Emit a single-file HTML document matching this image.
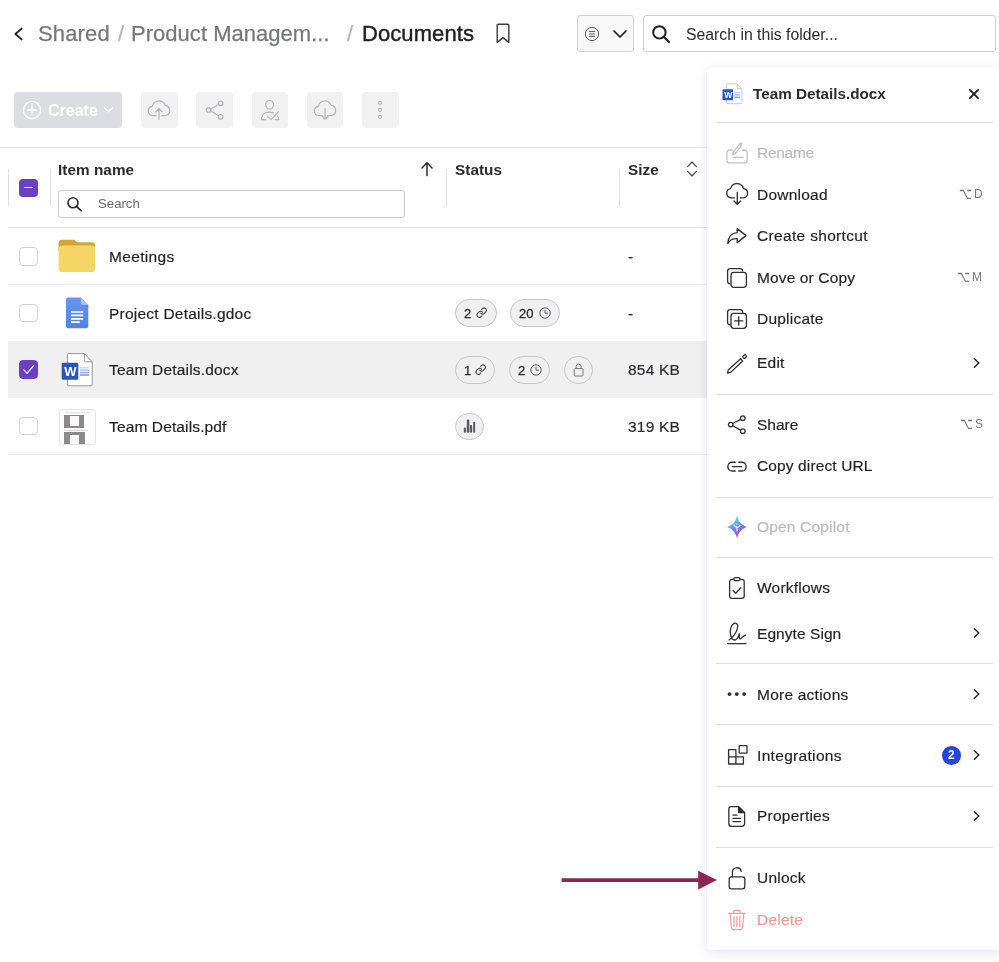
<!DOCTYPE html>
<html lang="en">
<head>
<meta charset="utf-8">
<title>Documents</title>
<style>
*{box-sizing:border-box;margin:0;padding:0}
html,body{width:999px;height:962px;overflow:hidden;background:#fff}
body{font-family:"Liberation Sans",sans-serif;color:#1f2024;position:relative}
.abs{position:absolute}
.t{position:absolute;white-space:nowrap;line-height:1;will-change:transform}
.pill span{will-change:transform}
svg{position:absolute;overflow:visible}
/* header */
.crumb{-webkit-text-stroke:0.25px;font-size:22px;letter-spacing:0.03px;color:#75777d}
.crumb.cur{color:#1f2024;-webkit-text-stroke:0.45px #1f2024}
.box{position:absolute;border:1px solid #c9cacf;border-radius:3px;background:#fff}
/* toolbar */
.ib{position:absolute;top:92px;width:36.5px;height:36px;border-radius:4px;background:#f1f1f2}
/* table */
.hl{position:absolute;left:8px;height:1px;background:#e6e6e9}
.cb{position:absolute;left:19px;width:19px;height:18.5px;border:1.2px solid #d3d3d5;border-radius:4px;background:#fff}
.name{-webkit-text-stroke:0.18px #1f2024;font-size:15.5px;letter-spacing:0.23px;color:#1f2024;left:109px}
.size{-webkit-text-stroke:0.18px #2a2b30;font-size:15.5px;letter-spacing:0.2px;color:#2a2b30;left:628px}
.pill{position:absolute;height:27.5px;border:1px solid #c6c7cb;border-radius:14px;background:#f0f0f1;font-size:13px;color:#2a2b30}
.pill span{position:absolute;top:7px;line-height:1;-webkit-text-stroke:0.3px #2a2b30}
/* panel */
#panel{position:absolute;left:707px;top:67px;width:300px;height:883px;background:#fff;border-radius:3.5px;box-shadow:0 3px 12px rgba(90,80,190,.15),0 0 1px rgba(90,80,190,.16)}
.mi{-webkit-text-stroke:0.18px;font-size:15.5px;letter-spacing:0.23px;color:#1f2024;left:50px}
.mi.dis{color:#b9babf}
.mi.del{color:#eb9a9a}
.sc{font-size:12px;color:#75777d}
.opt{display:inline-block;transform:scale(.92,1.32);transform-origin:50% 55%}
.sep{position:absolute;left:9px;width:277px;height:1px;background:#dddde3}
</style>
</head>
<body>

<!-- ===== header / breadcrumb ===== -->
<svg style="left:13px;top:26px" width="12" height="16" viewBox="0 0 12 16"><path d="M8.6 2.6 L2.4 8 L8.6 13.4" fill="none" stroke="#1f2024" stroke-width="1.9" stroke-linecap="round" stroke-linejoin="round"/></svg>
<div class="t crumb" id="c1" style="left:37.8px;top:22.7px;letter-spacing:0.15px">Shared</div>
<div class="t crumb" id="c2" style="left:117.6px;top:22.7px;color:#b4b5ba">/</div>
<div class="t crumb" id="c3" style="left:131px;top:22.7px">Product Managem...</div>
<div class="t crumb" id="c4" style="left:347.4px;top:22.7px;color:#b4b5ba">/</div>
<div class="t crumb cur" id="c5" style="left:362px;top:22.7px;letter-spacing:0.08px">Documents</div>
<svg style="left:496px;top:23px" width="14" height="21" viewBox="0 0 14 21"><path d="M1.2 2.4 Q1.2 1.2 2.4 1.2 H11.6 Q12.8 1.2 12.8 2.4 V19.4 L7 14.6 L1.2 19.4 Z" fill="none" stroke="#3a3b40" stroke-width="1.4" stroke-linejoin="round"/></svg>

<div class="box" style="left:577px;top:15px;width:57px;height:37px;background:#f8f8f9;border-color:#d3d3d7"></div>
<svg style="left:584px;top:26px" width="16" height="16" viewBox="0 0 16 16"><circle cx="8" cy="8" r="6.6" fill="none" stroke="#55565c" stroke-width="1"/><path d="M5 5.6H11M5 8H11M5 10.4H11" stroke="#55565c" stroke-width="1"/></svg>
<svg style="left:612px;top:28px" width="16" height="12" viewBox="0 0 16 12"><path d="M2 3 L8 9 L14 3" fill="none" stroke="#1f2024" stroke-width="1.7" stroke-linecap="round" stroke-linejoin="round"/></svg>

<div class="box" style="left:643px;top:15px;width:353px;height:37px;border-color:#cfd0d4"></div>
<svg style="left:651px;top:24px" width="20" height="20" viewBox="0 0 20 20"><circle cx="8.4" cy="8.4" r="6.2" fill="none" stroke="#1f2024" stroke-width="2"/><path d="M13 13 L18 18" stroke="#1f2024" stroke-width="2.2" stroke-linecap="round"/></svg>
<div class="t" id="sf" style="left:686px;top:26.7px;font-size:15.8px;color:#2a2b30">Search in this folder...</div>

<!-- ===== toolbar ===== -->
<div class="abs" style="left:14px;top:92px;width:108px;height:36px;border-radius:4px;background:#dcdde2"></div>
<svg style="left:22px;top:100px" width="20" height="20" viewBox="0 0 20 20"><circle cx="10" cy="10" r="8.6" fill="none" stroke="#fff" stroke-width="1.3"/><path d="M10 5.6V14.4M5.6 10H14.4" stroke="#fff" stroke-width="1.3" stroke-linecap="round"/></svg>
<div class="t" id="cr" style="left:47.6px;top:103px;font-size:16px;font-weight:bold;color:#fff">Create</div>
<svg style="left:103px;top:106px" width="11" height="8" viewBox="0 0 11 8"><path d="M1.2 1.6 L5.5 5.8 L9.8 1.6" fill="none" stroke="#fff" stroke-width="1.2" stroke-linecap="round" stroke-linejoin="round"/></svg>

<div class="ib" style="left:141.2px"></div>
<div class="ib" style="left:196.4px"></div>
<div class="ib" style="left:251.6px"></div>
<div class="ib" style="left:306.8px"></div>
<div class="ib" style="left:362px"></div>
<!-- cloud upload -->
<svg style="left:147.3px;top:99px" width="24" height="22" viewBox="0 0 24 22" fill="none" stroke="#b3b4b9" stroke-width="1.2" stroke-linecap="round" stroke-linejoin="round"><path d="M9.2 16.6 H5.9 A4.6 4.6 0 0 1 5.3 7.45 A6.7 6.7 0 0 1 18.2 6.4 A5.15 5.15 0 0 1 18.2 16.6 H14.8"/><path d="M12 20.2 V9.6 M8.7 12.8 L12 9.5 L15.3 12.8"/></svg>
<!-- share -->
<svg style="left:204.2px;top:99px" width="22" height="22" viewBox="0 0 22 22" fill="none" stroke="#b3b4b9" stroke-width="1.2"><circle cx="16.6" cy="4.3" r="2.3"/><circle cx="4.6" cy="11" r="2.3"/><circle cx="16.6" cy="17.8" r="2.3"/><path d="M6.6 9.9 L14.6 5.4 M6.6 12.1 L14.6 16.7"/></svg>
<!-- person check -->
<svg style="left:259.3px;top:98px" width="22" height="24" viewBox="0 0 22 24" fill="none" stroke="#b3b4b9" stroke-width="1.2" stroke-linecap="round" stroke-linejoin="round"><ellipse cx="10.6" cy="6.8" rx="3.9" ry="4.3"/><path d="M7 21.6 H2.4 C2.4 17 5.6 14.1 10.2 14.1 C12 14.1 13.4 14.4 14.6 14.9"/><path d="M8.4 18.4 L12 21.6 L19.6 13.5"/><path d="M18.6 18 C19.3 19 19.6 20 19.6 21.6 H16.2"/></svg>
<!-- cloud download -->
<svg style="left:313px;top:99px" width="24" height="22" viewBox="0 0 24 22" fill="none" stroke="#b3b4b9" stroke-width="1.2" stroke-linecap="round" stroke-linejoin="round"><path d="M9.2 16.6 H5.9 A4.6 4.6 0 0 1 5.3 7.45 A6.7 6.7 0 0 1 18.2 6.4 A5.15 5.15 0 0 1 18.2 16.6 H14.8"/><path d="M12 9.6 V20.2 M8.7 17 L12 20.3 L15.3 17"/></svg>
<!-- kebab -->
<svg style="left:374.2px;top:98.6px" width="12" height="22" viewBox="0 0 12 22" fill="none" stroke="#b3b4b9" stroke-width="1.1"><circle cx="6" cy="3.9" r="1.5"/><circle cx="6" cy="10.9" r="1.5"/><circle cx="6" cy="17.9" r="1.5"/></svg>

<!-- ===== table ===== -->
<div class="hl" style="top:147px;left:0;width:707px"></div>
<div class="hl" style="top:227px;width:699px;background:#e4e4e8"></div>
<div class="hl" style="top:283.7px;width:699px;background:#efeff2"></div>
<div class="hl" style="top:454px;width:699px;background:#ededf0"></div>
<div class="abs" style="left:8px;top:340.8px;width:699px;height:57.2px;background:#f0f0f0"></div>

<div class="t" style="left:58px;top:161.6px;font-size:15.3px;letter-spacing:0.05px;font-weight:bold;color:#2a2b30" id="h1">Item name</div>
<div class="t" style="left:455px;top:161.6px;font-size:15.3px;letter-spacing:0.05px;font-weight:bold;color:#2a2b30" id="h2">Status</div>
<div class="t" style="left:628px;top:161.6px;font-size:15.3px;letter-spacing:0.05px;font-weight:bold;color:#2a2b30" id="h3">Size</div>
<div class="box" style="left:58px;top:190px;width:346.5px;height:28px"></div>
<div class="abs" style="left:8px;top:169px;width:1px;height:37px;background:#dfdfe3"></div>
<div class="abs" style="left:49.5px;top:169px;width:1px;height:37px;background:#dfdfe3"></div>
<div class="abs" style="left:446px;top:169px;width:1px;height:37px;background:#dfdfe3"></div>
<div class="abs" style="left:619px;top:169px;width:1px;height:37px;background:#dfdfe3"></div>
<div class="abs" style="left:19px;top:178.5px;width:19px;height:18.5px;border-radius:4px;background:#6a42c1"></div>
<div class="abs" style="left:24px;top:186.8px;width:9px;height:1.6px;border-radius:1px;background:#e9e2fa"></div>
<svg style="left:66px;top:196px" width="17" height="16" viewBox="0 0 17 16"><circle cx="7" cy="6.8" r="5" fill="none" stroke="#2a2b30" stroke-width="1.6"/><path d="M10.8 10.6 L15 14.6" stroke="#2a2b30" stroke-width="1.8" stroke-linecap="round"/></svg>
<svg style="left:420px;top:161px" width="14" height="16" viewBox="0 0 14 16" fill="none" stroke="#2a2b30" stroke-width="1.5" stroke-linecap="round" stroke-linejoin="round"><path d="M7 14.4 V2 M2 7 L7 1.8 L12 7"/></svg>
<svg style="left:686px;top:160px" width="12" height="18" viewBox="0 0 12 18" fill="none" stroke="#3a3b40" stroke-width="1.1" stroke-linecap="round" stroke-linejoin="round"><path d="M1.6 6.6 L6 2 L10.4 6.6 M1.6 11.4 L6 16 L10.4 11.4"/></svg>
<div class="t" style="left:98px;top:197px;font-size:13.2px;color:#696a70" id="hs">Search</div>

<div class="t name" style="top:249.45px;letter-spacing:0.33px">Meetings</div>
<div class="t name" style="top:306.15px">Project Details.gdoc</div>
<div class="t name" style="top:362.4px;letter-spacing:0.18px">Team Details.docx</div>
<div class="t name" style="top:418.9px;letter-spacing:0.13px">Team Details.pdf</div>
<div class="t size" style="top:249.45px">-</div>
<div class="t size" style="top:306.15px">-</div>
<div class="t size" style="top:362.4px">854 KB</div>
<div class="t size" style="top:418.9px">319 KB</div>

<div class="cb" style="top:247px"></div>
<div class="cb" style="top:303.7px"></div>
<div class="cb" style="top:360.3px;background:#6a42c1;border-color:#6a42c1"></div>
<svg style="left:19px;top:360.3px" width="19" height="19" viewBox="0 0 19 19"><path d="M4.9 9.9 L8.1 13.3 L14.6 5.6" fill="none" stroke="#fff" stroke-width="1.15" stroke-linecap="round" stroke-linejoin="round"/></svg>
<div class="cb" style="top:416.9px"></div>

<!-- folder icon -->
<svg style="left:58px;top:239px" width="38" height="34" viewBox="0 0 38 34"><path d="M0.6 4.2 Q0.6 0.8 4 0.8 H15 Q16.6 0.8 17.6 1.9 L18.4 2.7 Q19 3.3 20 3.3 H33.6 Q37 3.3 37 6.7 V12 H0.6 Z" fill="#d4a62f"/><rect x="0.6" y="6.4" width="36.4" height="26.6" rx="3.6" fill="#f6d568"/></svg>
<!-- gdoc icon -->
<svg style="left:66px;top:297px" width="23" height="32" viewBox="0 0 23 32"><defs><linearGradient id="gd" x1="0" y1="0" x2="0" y2="1"><stop offset="0" stop-color="#6a94ee"/><stop offset="1" stop-color="#5482e4"/></linearGradient></defs><path d="M2 0.4 H14.8 L22.3 7.9 V29.2 Q22.3 31.2 20.3 31.2 H2 Q0 31.2 0 29.2 V2.4 Q0 0.4 2 0.4 Z" fill="url(#gd)"/><path d="M14.8 0.4 L22.3 7.9 H16.8 Q14.8 7.9 14.8 5.9 Z" fill="#a9c1f5"/><path d="M14.9 7.9 H22.3 V10.2 Z" fill="#4a74d0" opacity=".55"/><path d="M5 15 H17.2 M5 18.4 H17.2 M5 21.8 H17.2 M5 25.2 H13.8" stroke="#fff" stroke-width="1.7"/></svg>
<!-- word icon -->
<svg style="left:61px;top:352px" width="33" height="36" viewBox="0 0 33 36"><path d="M7.6 1.6 H23.4 L31.2 9.8 V32.6 Q31.2 33.8 30 33.8 H7.6 Q6.4 33.8 6.4 32.6 V2.8 Q6.4 1.6 7.6 1.6 Z" fill="#fff" stroke="#8a8a8a" stroke-width="0.9"/><path d="M23.4 1.6 V8.6 Q23.4 9.8 24.6 9.8 H31.2" fill="none" stroke="#8a8a8a" stroke-width="0.9"/><path d="M19 15.8 H28" stroke="#c3d6f2" stroke-width="1.5"/><path d="M19 18.2 H28" stroke="#a9c3ec" stroke-width="1.5"/><path d="M19 20.6 H28" stroke="#8fade0" stroke-width="1.5"/><path d="M19 23 H28" stroke="#7b97d2" stroke-width="1.5"/><rect x="0.7" y="10.8" width="16.6" height="17" rx="1.2" fill="#2a56b5"/></svg>
<div class="t" style="left:61.7px;top:364.6px;width:16.6px;text-align:center;font-size:13px;font-weight:bold;color:#fff">W</div>
<!-- pdf thumbnail -->
<div class="abs" style="left:59px;top:409px;width:36.5px;height:36px;border:1px solid #e2e2e4;border-radius:4px;background:#fff;overflow:hidden">
  <div class="abs" style="left:5px;top:1.5px;width:26px;height:1px;background:#e2e2e2"></div>
  <div class="abs" style="left:4.4px;top:4.6px;width:19.4px;height:13.6px;background:#8b8b8b"></div>
  <div class="abs" style="left:9.8px;top:6.4px;width:8.8px;height:9.6px;background:#fbf7f7"></div>
  <div class="abs" style="left:4.4px;top:19.6px;width:24px;height:1px;background:#d4d8e2"></div>
  <div class="abs" style="left:4.4px;top:22px;width:20.6px;height:14px;background:#8b8b8b"></div>
  <div class="abs" style="left:10px;top:24.6px;width:9.2px;height:12px;background:#fbf7f7"></div>
</div>

<!-- status pills -->
<div class="pill" style="left:455px;top:299px;width:41.5px"><span style="left:8px">2</span></div>
<div class="pill" style="left:510px;top:299px;width:49.5px"><span style="left:8px">20</span></div>
<div class="pill" style="left:455px;top:356px;width:40px"><span style="left:8px">1</span></div>
<div class="pill" style="left:509px;top:356px;width:41px"><span style="left:7.6px">2</span></div>
<div class="pill" style="left:564px;top:356px;width:29px"></div>
<div class="pill" style="left:455px;top:412.5px;width:29px"></div>
<!-- link icons -->
<svg style="left:476px;top:307.4px" width="11.4" height="11.4" viewBox="0 0 24 24" fill="none" stroke="#45464b" stroke-width="2.25" stroke-linecap="round"><path d="M10 13a5 5 0 0 0 7.54.54l3-3a5 5 0 0 0-7.07-7.07l-1.72 1.71"/><path d="M14 11a5 5 0 0 0-7.54-.54l-3 3a5 5 0 0 0 7.07 7.07l1.71-1.71"/></svg>
<svg style="left:474.8px;top:364.4px" width="11.4" height="11.4" viewBox="0 0 24 24" fill="none" stroke="#45464b" stroke-width="2.25" stroke-linecap="round"><path d="M10 13a5 5 0 0 0 7.54.54l3-3a5 5 0 0 0-7.07-7.07l-1.72 1.71"/><path d="M14 11a5 5 0 0 0-7.54-.54l-3 3a5 5 0 0 0 7.07 7.07l1.71-1.71"/></svg>
<!-- clock icons -->
<svg style="left:539px;top:307px" width="12" height="12" viewBox="0 0 12 12" fill="none" stroke="#4a4b50" stroke-width="0.9"><circle cx="6" cy="6" r="5.2"/><path d="M6 2.8 V6.2 H9"/></svg>
<svg style="left:530px;top:364px" width="12" height="12" viewBox="0 0 12 12" fill="none" stroke="#4a4b50" stroke-width="0.9"><circle cx="6" cy="6" r="5.2"/><path d="M6 2.8 V6.2 H9"/></svg>
<!-- lock small -->
<svg style="left:573px;top:363px" width="11" height="14" viewBox="0 0 11 14" fill="none" stroke="#6a6b70" stroke-width="0.9"><rect x="1.2" y="5.6" width="8.8" height="7.4" rx="1"/><path d="M3.2 5.6 V3.4 A2.4 2.4 0 0 1 8 3.4 V5.6"/></svg>
<!-- bars -->
<svg style="left:463px;top:419px" width="13" height="15" viewBox="0 0 13 15" fill="#5a5a5f"><rect x="0.8" y="8.5" width="2.1" height="5.3" rx="1"/><rect x="3.8" y="0.5" width="2.5" height="13.3" rx="1.1"/><rect x="6.9" y="6" width="2.2" height="7.8" rx="1"/><rect x="10.1" y="2.8" width="2" height="11" rx="1"/></svg>

<!-- ===== context panel ===== -->
<div id="panel">
  <div class="t" style="left:46px;top:19px;font-size:15.25px;font-weight:bold;color:#2a2b30" id="pt">Team Details.docx</div>
  <div class="sep" style="top:55px"></div>
  <div class="t mi dis" style="top:78.35px;letter-spacing:-0.27px">Rename</div>
  <div class="t mi" style="top:119.85px">Download</div>
  <div class="t mi" style="top:161.35px;letter-spacing:0.33px">Create shortcut</div>
  <div class="t mi" style="top:202.55px;letter-spacing:0.13px">Move or Copy</div>
  <div class="t mi" style="top:244.25px">Duplicate</div>
  <div class="t mi" style="top:288.35px">Edit</div>
  <div class="sep" style="top:327px"></div>
  <div class="t mi" style="top:349.85px;letter-spacing:0px">Share</div>
  <div class="t mi" style="top:391.45px;letter-spacing:0.12px">Copy direct URL</div>
  <div class="sep" style="top:429.6px"></div>
  <div class="t mi dis" style="top:452.15px;letter-spacing:0.18px">Open Copilot</div>
  <div class="sep" style="top:490.3px"></div>
  <div class="t mi" style="top:513.25px">Workflows</div>
  <div class="t mi" style="top:558.85px;letter-spacing:0.06px">Egnyte Sign</div>
  <div class="sep" style="top:596px"></div>
  <div class="t mi" style="top:619.65px">More actions</div>
  <div class="sep" style="top:657px"></div>
  <div class="t mi" style="top:680.85px;letter-spacing:0.32px">Integrations</div>
  <div class="sep" style="top:718.5px"></div>
  <div class="t mi" style="top:741.45px">Properties</div>
  <div class="sep" style="top:779.6px"></div>
  <div class="t mi" style="top:803.35px">Unlock</div>
  <div class="t mi del" style="top:844.55px">Delete</div>
</div>

<!-- ===== panel icons (absolute page coords) ===== -->
<!-- small word icon -->
<svg style="left:722px;top:83px" width="21" height="22" viewBox="0 0 21 22"><path d="M5.2 0.8 H15 L20 5.8 V19.8 Q20 20.6 19.2 20.6 H5.2 Q4.4 20.6 4.4 19.8 V1.6 Q4.4 0.8 5.2 0.8 Z" fill="#fff" stroke="#b5b5b8" stroke-width="0.7"/><path d="M15 0.8 V5 Q15 5.8 15.8 5.8 H20" fill="none" stroke="#b5b5b8" stroke-width="0.7"/><path d="M12.2 9.6 H18" stroke="#b9d0f2" stroke-width="1"/><path d="M12.2 11.3 H18" stroke="#a3bfea" stroke-width="1"/><path d="M12.2 13 H18" stroke="#8eaadf" stroke-width="1"/><path d="M12.2 14.7 H18" stroke="#7d98d3" stroke-width="1"/><rect x="0.5" y="6.2" width="10.6" height="11" rx="0.8" fill="#2a56b5"/></svg>
<div class="t" style="left:722.5px;top:90.6px;width:10.6px;text-align:center;font-size:8.6px;font-weight:bold;color:#fff">W</div>
<!-- close x -->
<svg style="left:968px;top:88px" width="12" height="12" viewBox="0 0 12 12"><path d="M1.9 1.9 L10.1 10.1 M10.1 1.9 L1.9 10.1" stroke="#1f2024" stroke-width="1.9" stroke-linecap="round"/></svg>
<!-- rename -->
<svg style="left:725px;top:141px" width="24" height="24" viewBox="0 0 24 24" fill="none" stroke="#c3c4c9" stroke-width="1.3" stroke-linecap="round" stroke-linejoin="round"><path d="M7.4 9 H4.6 Q1.9 9 1.9 11.7 V19.2 Q1.9 21.9 4.6 21.9 H19.4 Q22.1 21.9 22.1 19.2 V11.7 Q22.1 9 19.4 9 H17.4"/><path d="M8.6 16.3 H18"/><path d="M7.6 13.6 L8.4 11 L14.2 3.6 L16.2 5.1 L10.2 12.6 Z"/><circle cx="15.9" cy="2.9" r="1.1"/></svg>
<!-- download -->
<svg style="left:724.6px;top:183.2px" width="25" height="23" viewBox="0 0 25 23" fill="none" stroke="#2f3035" stroke-width="1.35" stroke-linecap="round" stroke-linejoin="round"><path d="M9.4 14.8 H6 A4.6 4.6 0 0 1 5.5 5.7 A6.7 6.7 0 0 1 18.5 5.6 A4.65 4.65 0 0 1 18.7 14.8 H15.2"/><path d="M12.3 9.4 V21.2 M9 18 L12.3 21.3 L15.6 18"/></svg>
<!-- create shortcut -->
<svg style="left:726px;top:227px" width="22" height="19" viewBox="0 0 22 19" fill="none" stroke="#2f3035" stroke-width="1.35" stroke-linejoin="round"><path d="M11.2 1.6 L20 8.6 L11.2 15.6 V11.6 C7 11.4 4 12.6 1.8 16.4 C2.2 10 5.6 6 11.2 5.6 Z"/></svg>
<!-- move or copy -->
<svg style="left:726px;top:266.6px" width="22" height="22" viewBox="0 0 22 22" fill="none" stroke="#2f3035" stroke-width="1.3" stroke-linejoin="round"><path d="M4.6 16.8 H4.2 Q1.6 16.8 1.6 14.2 V4.2 Q1.6 1.6 4.2 1.6 H14 Q16.6 1.6 16.8 4.4"/><rect x="5" y="5.4" width="15.4" height="15" rx="2.8" fill="#fff"/></svg>
<!-- duplicate -->
<svg style="left:726px;top:307.8px" width="22" height="22" viewBox="0 0 22 22" fill="none" stroke="#2f3035" stroke-width="1.3" stroke-linejoin="round" stroke-linecap="round"><path d="M4.6 16.8 H4.2 Q1.6 16.8 1.6 14.2 V4.2 Q1.6 1.6 4.2 1.6 H14 Q16.6 1.6 16.8 4.4"/><rect x="5" y="5.4" width="15.4" height="15" rx="2.8" fill="#fff"/><path d="M12.7 8.8 V17 M8.6 12.9 H16.8"/></svg>
<!-- edit pencil -->
<svg style="left:726px;top:353px" width="22" height="22" viewBox="0 0 22 22" fill="none" stroke="#2f3035" stroke-width="1.3" stroke-linejoin="round" stroke-linecap="round"><path d="M1.6 20.2 L2.2 17 L14.6 5.8 L16.6 8 L4.6 19.4 Z"/><ellipse cx="18.6" cy="3.6" rx="1.9" ry="1.5" transform="rotate(-42 18.6 3.6)"/></svg>
<!-- share -->
<svg style="left:727px;top:414px" width="20" height="21" viewBox="0 0 20 21" fill="none" stroke="#2f3035" stroke-width="1.3"><circle cx="15.8" cy="4.2" r="2.3"/><circle cx="3.7" cy="10.6" r="2.3"/><circle cx="15.8" cy="17.2" r="2.3"/><path d="M5.7 9.5 L13.8 5.3 M5.7 11.7 L13.8 16.1"/></svg>
<!-- link -->
<svg style="left:726px;top:460px" width="22" height="13" viewBox="0 0 22 13" fill="none" stroke="#2f3035" stroke-width="1.4" stroke-linecap="round"><path d="M9.2 2.3 H6.2 A4.35 4.35 0 0 0 6.2 11 H9.2 M12.8 2.3 H15.8 A4.35 4.35 0 0 1 15.8 11 H12.8 M6.4 6.65 H15.6"/></svg>
<!-- copilot star -->
<svg style="left:726px;top:515px" width="22" height="24" viewBox="0 0 22 24"><defs><linearGradient id="cg" x1="0.3" y1="0" x2="0.7" y2="1"><stop offset="0" stop-color="#70ece4"/><stop offset="0.36" stop-color="#69aaf0"/><stop offset="0.6" stop-color="#7f70f0"/><stop offset="0.8" stop-color="#a25cc8"/><stop offset="1" stop-color="#cc4268"/></linearGradient></defs><path d="M11 0.3 C11.8 4 12.8 6.2 14.4 7.8 C16 9.6 18 10.8 20.7 12 C18 13.2 16 14.4 14.4 16.2 C12.8 17.8 11.8 20 11 23.6 C10.2 20 9.2 17.8 7.6 16.2 C6 14.4 4 13.2 1.3 12 C4 10.8 6 9.6 7.6 7.8 C9.2 6.2 10.2 4 11 0.3 Z" fill="url(#cg)"/><path d="M8 10.4 L11 12.7 L14 10.4 M11 12.7 V15.8" stroke="#fff" stroke-width="1.2" fill="none" stroke-linecap="round"/><circle cx="10.8" cy="9.1" r="0.7" fill="#fff" opacity=".8"/></svg>
<!-- workflows clipboard -->
<svg style="left:727px;top:576px" width="20" height="24" viewBox="0 0 20 24" fill="none" stroke="#2f3035" stroke-width="1.3" stroke-linejoin="round" stroke-linecap="round"><rect x="2.6" y="3.4" width="14.6" height="19" rx="2.4"/><rect x="6.8" y="1.6" width="6.2" height="3" rx="1.4" fill="#fff"/><path d="M6.2 14.8 L8.8 17.2 L13.8 11.8"/></svg>
<!-- egnyte sign -->
<svg style="left:726px;top:622px" width="22" height="24" viewBox="0 0 22 24" fill="none" stroke="#2f3035" stroke-width="1.3" stroke-linecap="round" stroke-linejoin="round"><path d="M1.6 21.6 H20"/><path d="M3.1 18 C6.6 16 11 10 11.7 5 C12.1 2 9.8 0.6 8 1.4 C5 2.8 4 8 4.4 11.5 C4.8 15.2 6.4 18.2 9.1 18 C11.5 17.8 12.6 14 13.3 11.7 C13.2 14 13.2 17.2 14.2 17 C15.4 16.6 16.4 14 19.7 13.1"/></svg>
<!-- more dots -->
<svg style="left:726px;top:691px" width="22" height="6" viewBox="0 0 22 6" fill="#2f3035"><circle cx="3.5" cy="3.1" r="1.95"/><circle cx="10.8" cy="3.1" r="1.95"/><circle cx="18.2" cy="3.1" r="1.95"/></svg>
<!-- integrations -->
<svg style="left:727px;top:744.1px" width="22" height="22" viewBox="0 0 22 22" fill="none" stroke="#2f3035" stroke-width="1.3" stroke-linejoin="round"><path d="M1.6 5.6 H8.9 V12.8 H16.4 V20 H1.6 Z M1.6 12.8 H8.9 V20"/><rect x="12.2" y="1.6" width="7.8" height="7.6" rx="0.6"/></svg>
<!-- properties -->
<svg style="left:727px;top:805.1px" width="20" height="23" viewBox="0 0 20 23" fill="none" stroke="#2f3035" stroke-width="1.3" stroke-linejoin="round" stroke-linecap="round"><path d="M4.4 1.6 H11.6 L17.6 7.6 V18.6 Q17.6 21.4 14.8 21.4 H4.4 Q1.8 21.4 1.8 18.6 V4.4 Q1.8 1.6 4.4 1.6 Z"/><path d="M11.6 1.6 L17.6 7.6 H11.6 Z" fill="#2f3035"/><path d="M6 10.2 H10 M6 13.4 H13.4 M6 16.6 H13.4"/></svg>
<!-- unlock -->
<svg style="left:727px;top:866px" width="20" height="25" viewBox="0 0 20 25" fill="none" stroke="#2f3035" stroke-width="1.3" stroke-linejoin="round" stroke-linecap="round"><rect x="2.2" y="10.8" width="15.6" height="12" rx="2.2"/><path d="M5.4 10.8 V6.4 C5.4 0.4 13.4 0.4 14.2 5.4"/></svg>
<!-- delete -->
<svg style="left:727px;top:908.6px" width="20" height="22" viewBox="0 0 20 22" fill="none" stroke="#ec9c9c" stroke-width="1.2" stroke-linejoin="round" stroke-linecap="round"><path d="M1.6 4.4 H18.2"/><path d="M6.8 4.2 V2.6 Q6.8 1.4 8 1.4 H11.8 Q13 1.4 13 2.6 V4.2"/><path d="M3 4.6 L4.4 19 Q4.6 20.6 6.2 20.6 H13.6 Q15.2 20.6 15.4 19 L16.8 4.6"/><path d="M7 7.6 V17.4 M9.9 7.6 V17.4 M12.8 7.6 V17.4"/></svg>
<!-- shortcuts / chevrons / badge -->
<div class="t sc" style="left:958.2px;top:188.2px"><span class="opt">&#8997;</span></div><div class="t sc" style="left:973.8px;top:188.2px">D</div>
<div class="t sc" style="left:956.4px;top:271.2px"><span class="opt">&#8997;</span></div><div class="t sc" style="left:972.2px;top:271.2px">M</div>
<div class="t sc" style="left:959.2px;top:418.4px"><span class="opt">&#8997;</span></div><div class="t sc" style="left:974.6px;top:418.4px">S</div>
<svg class="chev" style="left:972px;top:357px" width="9" height="12" viewBox="0 0 9 12"><path d="M2.4 1.8 L6.8 6 L2.4 10.2" fill="none" stroke="#1f2024" stroke-width="1.5" stroke-linecap="round" stroke-linejoin="round"/></svg>
<svg class="chev" style="left:972px;top:627px" width="9" height="12" viewBox="0 0 9 12"><path d="M2.4 1.8 L6.8 6 L2.4 10.2" fill="none" stroke="#1f2024" stroke-width="1.5" stroke-linecap="round" stroke-linejoin="round"/></svg>
<svg class="chev" style="left:972px;top:688px" width="9" height="12" viewBox="0 0 9 12"><path d="M2.4 1.8 L6.8 6 L2.4 10.2" fill="none" stroke="#1f2024" stroke-width="1.5" stroke-linecap="round" stroke-linejoin="round"/></svg>
<svg class="chev" style="left:972px;top:749px" width="9" height="12" viewBox="0 0 9 12"><path d="M2.4 1.8 L6.8 6 L2.4 10.2" fill="none" stroke="#1f2024" stroke-width="1.5" stroke-linecap="round" stroke-linejoin="round"/></svg>
<svg class="chev" style="left:972px;top:810px" width="9" height="12" viewBox="0 0 9 12"><path d="M2.4 1.8 L6.8 6 L2.4 10.2" fill="none" stroke="#1f2024" stroke-width="1.5" stroke-linecap="round" stroke-linejoin="round"/></svg>
<div class="abs" style="left:942px;top:746px;width:18.5px;height:18.5px;border-radius:50%;background:#2347d9"></div>
<div class="t" style="left:947.6px;top:749.4px;font-size:12px;font-weight:bold;color:#fff">2</div>

<!-- arrow -->
<svg style="left:560px;top:866px" width="160" height="28" viewBox="0 0 160 28"><path d="M1.6 14.1H140" stroke="#8b2652" stroke-width="3.6"/><path d="M138.2 4.7 L157 14.1 L138.2 23.5 Z" fill="#8b2652"/></svg>

</body>
</html>
